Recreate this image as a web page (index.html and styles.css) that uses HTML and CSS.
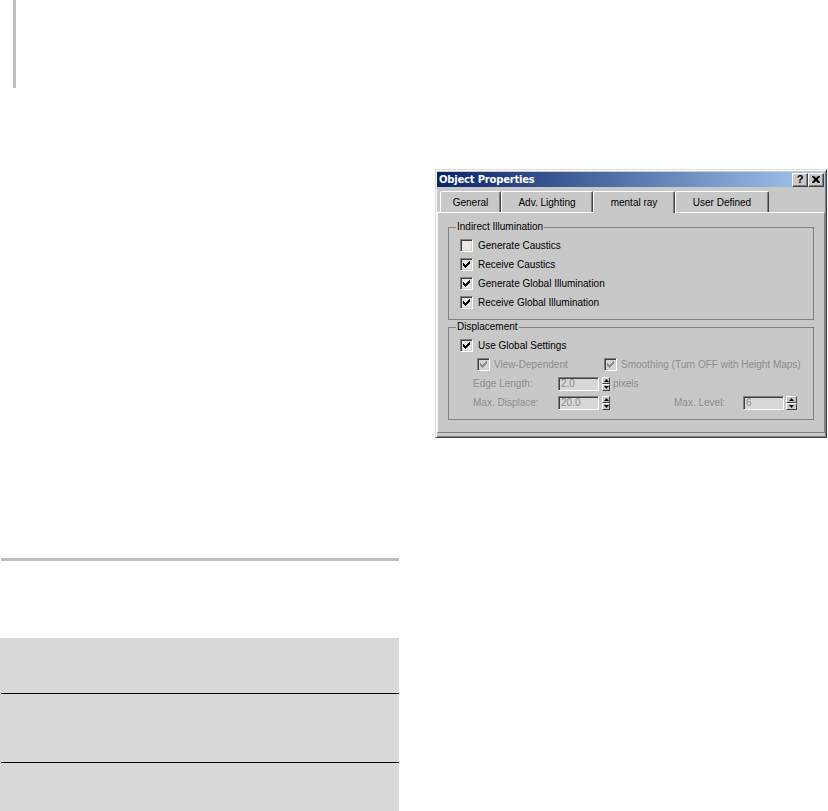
FILE: index.html
```html
<!DOCTYPE html>
<html>
<head>
<meta charset="utf-8">
<title>Object Properties</title>
<link rel="stylesheet" href="styles.css">
</head>
<body>
<div class="page">
  <div class="left">
    <div class="vbar"></div>
    <div class="hrule"></div>
    <div class="table">
      <div class="trow r1"></div>
      <div class="tline"></div>
      <div class="trow r2"></div>
      <div class="tline"></div>
      <div class="trow r3"></div>
    </div>
  </div>
  <div class="right">
    <div class="dialog">
      <div class="titlebar">
        <span class="title">Object Properties</span>
        <div class="tbtns">
          <div class="tbtn help">?</div>
          <div class="tbtn"><svg width="8" height="7" viewBox="0 0 8 7"><path d="M0 0h2l2 2 2-2h2v1l-2.5 2.5L8 6v1H6L4 5 2 7H0V6l2.5-2.5L0 1z" fill="#000"/></svg></div>
        </div>
      </div>
      <div class="tabs">
        <div class="tab t-general">General</div>
        <div class="tab t-adv">Adv. Lighting</div>
        <div class="tab t-mental active">mental ray</div>
        <div class="tab t-user">User Defined</div>
      </div>
      <div class="panel">
        <fieldset class="group">
          <legend>Indirect Illumination</legend>
          <div class="row"><span class="cb"></span><span>Generate Caustics</span></div>
          <div class="row"><span class="cb"><svg width="7" height="7" viewBox="0 0 7 7"><path d="M6 0h1v3h-1v1h-1v1h-1v1h-1v1h-1v-1h-1v-1h-1v-3h1v1h1v1h1v-1h1v-1h1v-1h1z"/></svg></span><span>Receive Caustics</span></div>
          <div class="row"><span class="cb"><svg width="7" height="7" viewBox="0 0 7 7"><path d="M6 0h1v3h-1v1h-1v1h-1v1h-1v1h-1v-1h-1v-1h-1v-3h1v1h1v1h1v-1h1v-1h1v-1h1z"/></svg></span><span>Generate Global Illumination</span></div>
          <div class="row"><span class="cb"><svg width="7" height="7" viewBox="0 0 7 7"><path d="M6 0h1v3h-1v1h-1v1h-1v1h-1v1h-1v-1h-1v-1h-1v-3h1v1h1v1h1v-1h1v-1h1v-1h1z"/></svg></span><span>Receive Global Illumination</span></div>
        </fieldset>
        <fieldset class="group g2">
          <legend>Displacement</legend>
          <div class="row"><span class="cb"><svg width="7" height="7" viewBox="0 0 7 7"><path d="M6 0h1v3h-1v1h-1v1h-1v1h-1v1h-1v-1h-1v-1h-1v-3h1v1h1v1h1v-1h1v-1h1v-1h1z"/></svg></span><span>Use Global Settings</span></div>
          <div class="row sub dis">
            <div class="opt opt-view"><span class="cb off"><svg width="7" height="7" viewBox="0 0 7 7"><path d="M6 0h1v3h-1v1h-1v1h-1v1h-1v1h-1v-1h-1v-1h-1v-3h1v1h1v1h1v-1h1v-1h1v-1h1z"/></svg></span><span>View-Dependent</span></div>
            <div class="opt"><span class="cb off"><svg width="7" height="7" viewBox="0 0 7 7"><path d="M6 0h1v3h-1v1h-1v1h-1v1h-1v1h-1v-1h-1v-1h-1v-3h1v1h1v1h1v-1h1v-1h1v-1h1z"/></svg></span><span>Smoothing (Turn OFF with Height Maps)</span></div>
          </div>
          <div class="row field dis">
            <span class="lbl">Edge Length:</span>
            <span class="edit">2.0</span>
            <span class="spin"><span class="half"><svg width="5" height="3" viewBox="0 0 5 3"><path d="M2.5 0L5 3H0z"/></svg></span><span class="half"><svg width="5" height="3" viewBox="0 0 5 3"><path d="M0 0h5L2.5 3z"/></svg></span></span>
            <span class="unit">pixels</span>
          </div>
          <div class="row field dis">
            <span class="lbl">Max. Displace:</span>
            <span class="edit">20.0</span>
            <span class="spin"><span class="half"><svg width="5" height="3" viewBox="0 0 5 3"><path d="M2.5 0L5 3H0z"/></svg></span><span class="half"><svg width="5" height="3" viewBox="0 0 5 3"><path d="M0 0h5L2.5 3z"/></svg></span></span>
            <span class="lbl lbl-level">Max. Level:</span>
            <span class="edit">6</span>
            <span class="spin spin-wide"><span class="half"><svg width="5" height="3" viewBox="0 0 5 3"><path d="M2.5 0L5 3H0z"/></svg></span><span class="half"><svg width="5" height="3" viewBox="0 0 5 3"><path d="M0 0h5L2.5 3z"/></svg></span></span>
          </div>
        </fieldset>
      </div>
    </div>
  </div>
</div>
</body>
</html>
```
FILE: styles.css
```css
* { box-sizing: border-box; }
html, body { margin: 0; background: #fff; }
body {
  font-family: "Liberation Sans", Arial, sans-serif;
  font-size: 10px;
  line-height: 12px;
  color: #000;
}
.page {
  display: grid;
  grid-template-columns: 400px 1fr;
  align-items: start;
  height: 811px;
  overflow: hidden;
}

/* left page column */
.left { display: flex; flex-direction: column; }
.vbar { width: 3px; height: 88px; margin-left: 13px; background: #c0c0c0; }
.hrule { width: 398px; height: 3px; margin: 470px 0 0 1px; background: #c0c0c0; }
.table { width: 399px; margin-top: 77px; background: #d9d9d9; }
.r1 { height: 55px; }
.r2 { height: 68px; }
.r3 { height: 48px; }
.tline { height: 1px; margin-left: 1px; background: #000; }

/* dialog */
.right { padding: 169px 0 0 35px; }
.dialog {
  width: 392px;
  height: 269px;
  display: flex;
  flex-direction: column;
  padding: 2px 1px 1px 1px;
  background: #c8c8c8;
  border: 1px solid;
  border-color: #dcdcdc #404040 #404040 #dcdcdc;
  box-shadow: inset 1px 1px 0 #fff, inset -1px -1px 0 #808080;
}
.titlebar {
  height: 15px;
  display: flex;
  align-items: center;
  justify-content: space-between;
  padding: 0 1px 0 2px;
  background: linear-gradient(to right, #0a246a, #a6caf0);
}
.title {
  font-family: "DejaVu Sans", Verdana, sans-serif;
  font-weight: bold;
  font-size: 10px;
  letter-spacing: -0.2px;
  color: #fff;
}
.tbtns { display: flex; }
.tbtn {
  width: 16px;
  height: 14px;
  display: flex;
  align-items: center;
  justify-content: center;
  background: #c8c8c8;
  border: 1px solid;
  border-color: #fff #404040 #404040 #fff;
  box-shadow: inset -1px -1px 0 #808080;
}
.help {
  font-family: "Liberation Sans", Arial, sans-serif;
  font-weight: bold;
  font-size: 11px;
  line-height: 11px;
  padding-bottom: 1px;
}

/* tabs */
.tabs {
  display: flex;
  align-items: flex-end;
  height: 22px;
  margin-top: 3px;
  padding-left: 3px;
}
.tab {
  height: 21px;
  display: flex;
  align-items: center;
  justify-content: center;
  padding-top: 1px;
  border-top: 1px solid #fff;
  border-left: 1px solid #fff;
  border-right: 1px solid #404040;
  box-shadow: inset -1px 0 0 #808080;
  border-radius: 2px 2px 0 0;
}
.t-general { width: 61px; }
.t-adv { width: 92px; }
.t-mental { width: 82px; }
.t-user { width: 94px; }
.tab.active {
  height: 22px;
  margin-bottom: -1px;
  position: relative;
  z-index: 1;
  background: #c8c8c8;
}

/* panel */
.panel {
  flex: 1;
  margin-bottom: 3px;
  padding: 8px 0 0 10px;
  border: 1px solid;
  border-color: #fff #808080 #808080 #fff;
}
.group {
  width: 366px;
  margin: 0;
  padding: 3px 0 7px 11px;
  min-width: 0;
  border: 1px solid #808080;
}
.group legend {
  margin-left: -4px;
  padding: 0 1px;
  height: 12px;
  line-height: 12px;
}
.g2 { margin-top: 1px; }

.row { height: 19px; display: flex; align-items: center; white-space: nowrap; }
.cb {
  width: 13px;
  height: 13px;
  flex: none;
  margin-right: 5px;
  display: flex;
  align-items: center;
  justify-content: center;
  background: #e8e8e8;
  border: 1px solid;
  border-color: #808080 #fff #fff #808080;
  box-shadow: inset 1px 1px 0 #404040, inset -1px -1px 0 #d4d0c8;
}
.cb svg { fill: #000; }
.cb.off { background: #d4d4d4; }
.cb.off svg { fill: #8c8c8c; }

.dis { color: #8c8c8c; }
.sub { padding-left: 17px; }
.opt { display: flex; align-items: center; }
.sub .cb { margin-right: 4px; }
.opt-view { width: 127px; }

.field { padding-left: 13px; }
.lbl { width: 85px; }
.lbl-level { width: 69px; margin-left: 64px; }
.edit {
  width: 41px;
  height: 14px;
  padding-left: 2px;
  line-height: 11px;
  background: #d8d8d8;
  border: 1px solid;
  border-color: #808080 #fff #fff #808080;
  box-shadow: inset 1px 1px 0 #404040;
  color: #8c8c8c;
}
.spin {
  width: 8px;
  height: 14px;
  margin-left: 3px;
  display: flex;
  flex-direction: column;
}
.spin-wide { width: 11px; margin-left: 2px; }
.half {
  height: 7px;
  display: flex;
  align-items: center;
  justify-content: center;
  background: #c8c8c8;
  border: 1px solid;
  border-color: #fff #404040 #404040 #fff;
}
.half svg { fill: #000; }
.unit { margin-left: 3px; }
```
